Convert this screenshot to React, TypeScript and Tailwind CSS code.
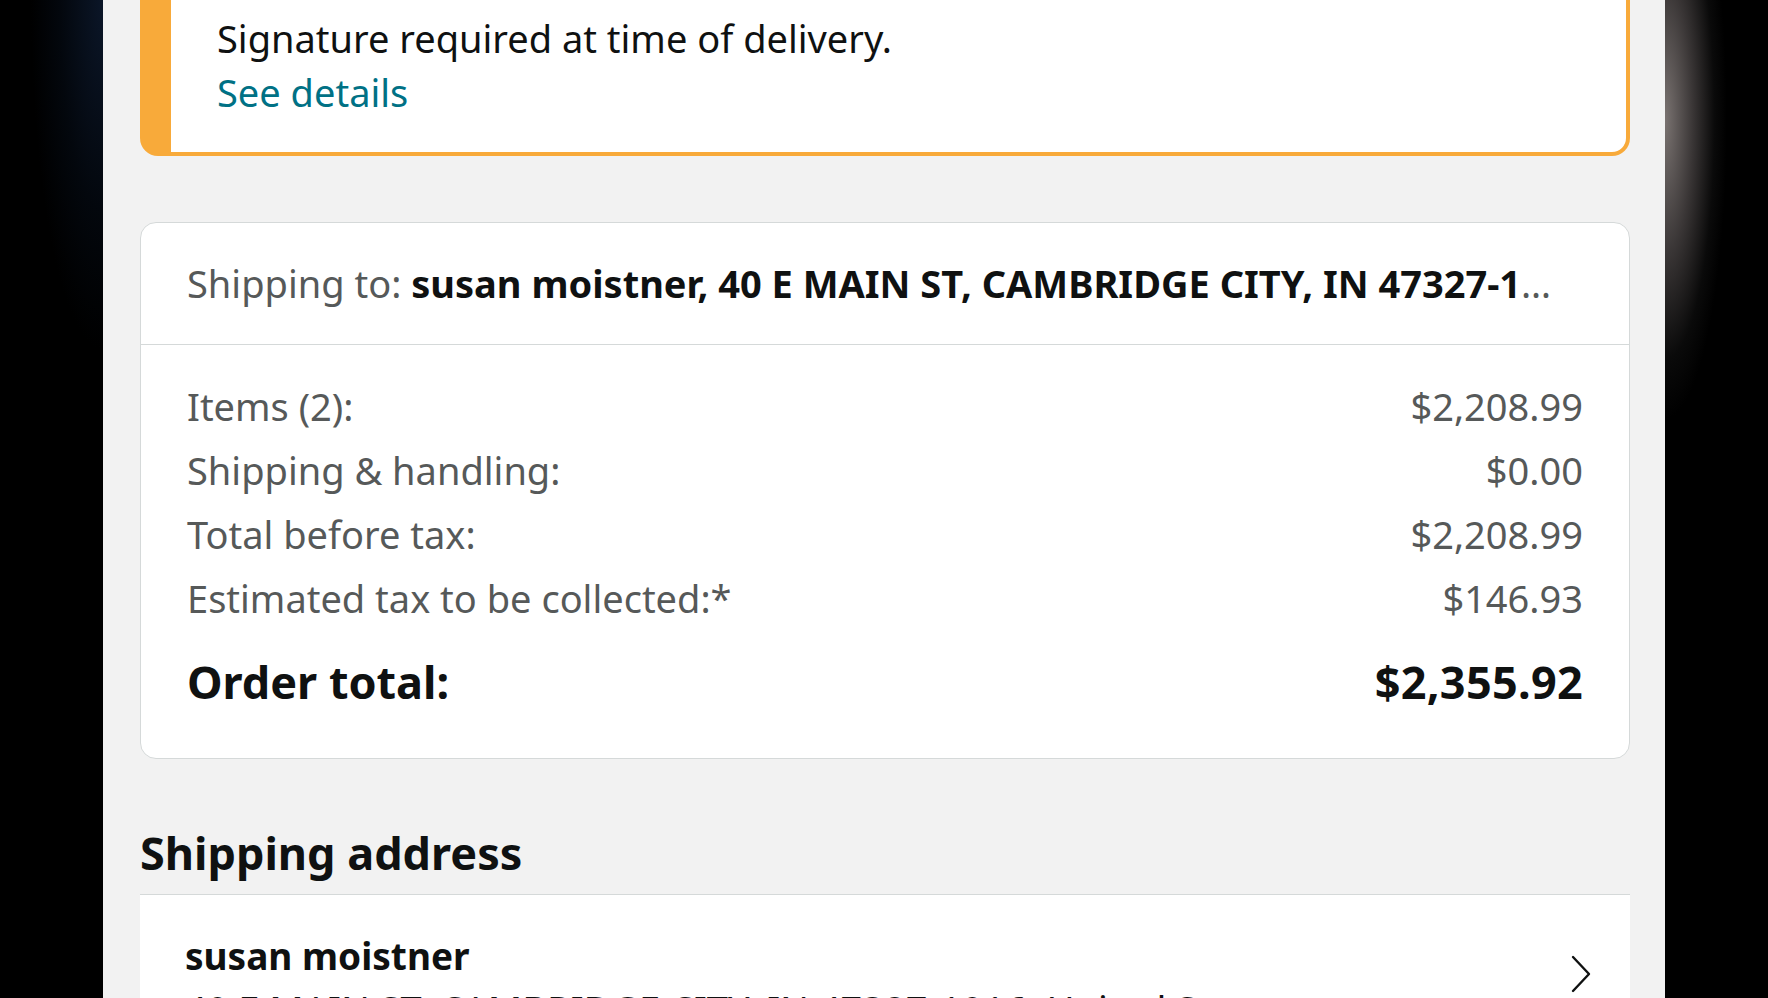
const summaryRows = [
  { label: "Items (2):", value: "$2,208.99" },
  { label: "Shipping & handling:", value: "$0.00" },
  { label: "Total before tax:", value: "$2,208.99" },
  { label: "Estimated tax to be collected:*", value: "$146.93" },
];

function ChevronRight() {
  return (
    <svg width="22" height="40" viewBox="0 0 22 40" fill="none">
      <polyline
        points="3,3 19,20 3,37"
        stroke="#0f1111"
        strokeWidth="2.4"
        strokeLinecap="round"
        strokeLinejoin="round"
      />
    </svg>
  );
}

function App() {
  return (
    <div className="flex h-[998px] w-full overflow-hidden bg-black font-['Noto_Sans',_'Open_Sans',_sans-serif]">
      {/* left backdrop */}
      <div className="h-full w-[103px] shrink-0 bg-[radial-gradient(ellipse_70%_35%_at_100%_0%,#0b1628_0%,#03070d_60%,#000_100%),radial-gradient(ellipse_80%_20%_at_100%_60%,#1b1926_0%,#000_100%)] bg-black" />

      {/* page */}
      <main className="flex h-full w-[1562px] shrink-0 flex-col overflow-hidden bg-[#f2f2f2] pl-[37px] pr-[35px]">
        {/* notice */}
        <section className="-mt-[50px] shrink-0 rounded-[18px] border-4 border-l-[31px] border-[#f8aa3a] bg-white pb-[33px] pl-[46px] pt-[57px]">
          <p className="text-[38px] leading-[54px] text-[#0f1111]">Signature required at time of delivery.</p>
          <a className="block text-[38px] leading-[54px] text-[#007185]">See details</a>
        </section>

        {/* order summary */}
        <section className="mt-[66px] shrink-0 overflow-hidden rounded-[16px] border border-[#d5d9d9] bg-white">
          <div className="flex h-[122px] items-center border-b border-[#d5d9d9] pl-[46px] pr-[60px]">
            <p className="truncate text-[38px] text-[#565959]">
              Shipping to:{" "}
              <span className="font-bold text-[#0f1111]">
                susan moistner, 40 E MAIN ST, CAMBRIDGE CITY, IN 47327-1016, United States
              </span>
            </p>
          </div>
          <div className="px-[46px] pb-[40px] pt-[29px]">
            {summaryRows.map((row) => (
              <div key={row.label} className="flex h-[64px] items-center justify-between text-[38px] text-[#565959]">
                <span>{row.label}</span>
                <span>{row.value}</span>
              </div>
            ))}
            <div className="mt-[16px] flex h-[72px] items-center justify-between text-[45px] font-bold text-[#0f1111]">
              <span>Order total:</span>
              <span className="tracking-[0.3px]">$2,355.92</span>
            </div>
          </div>
        </section>

        {/* shipping address */}
        <h2 className="mt-[66px] shrink-0 text-[45px] font-bold leading-[56px] text-[#0f1111]">Shipping address</h2>
        <section className="mt-[13px] flex shrink-0 items-start justify-between border-t border-[#d5d9d9] bg-white pl-[45px] pr-[38px] pt-[33px]">
          <div className="min-w-0 flex-1 pr-[120px]">
            <p className="text-[37px] font-bold leading-[56px] text-[#0f1111]">susan moistner</p>
            <p className="truncate text-[38px] leading-[50px] text-[#0f1111]">
              40 E MAIN ST, CAMBRIDGE CITY, IN 47327-1016, United States
            </p>
          </div>
          <div className="mt-[26px] shrink-0">
            <ChevronRight />
          </div>
        </section>
      </main>

      {/* right backdrop */}
      <div className="h-full flex-1 bg-[radial-gradient(ellipse_60%_30%_at_0%_12%,#7a7371_0%,#3a3636_45%,#0a0a0a_80%,#000_100%)]" />
    </div>
  );
}

export default App;
